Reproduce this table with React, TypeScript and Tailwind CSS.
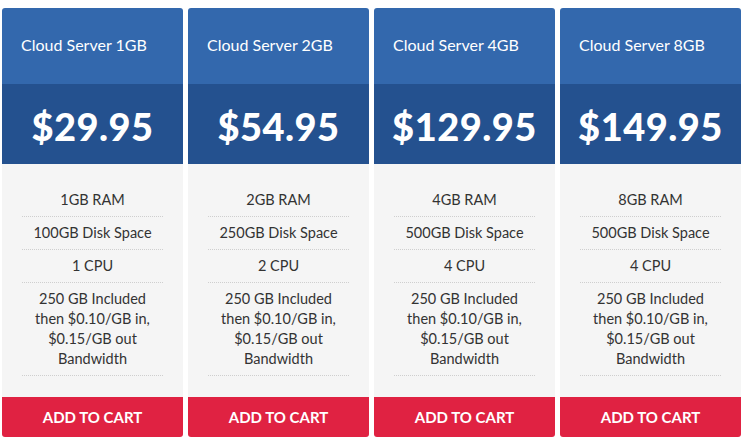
import React from "react";

const plans = [
  { name: "Cloud Server 1GB", price: "$29.95", ram: "1GB RAM", disk: "100GB Disk Space", cpu: "1 CPU" },
  { name: "Cloud Server 2GB", price: "$54.95", ram: "2GB RAM", disk: "250GB Disk Space", cpu: "2 CPU" },
  { name: "Cloud Server 4GB", price: "$129.95", ram: "4GB RAM", disk: "500GB Disk Space", cpu: "4 CPU" },
  { name: "Cloud Server 8GB", price: "$149.95", ram: "8GB RAM", disk: "500GB Disk Space", cpu: "4 CPU" },
];

export default function App() {
  return (
    <div
      className="w-[748px] h-[441px] bg-white pl-[2px] pt-[8px] flex gap-[5px]"
      style={{ fontFamily: "Lato, 'Open Sans', sans-serif" }}
    >
      {plans.map((p) => (
        <div key={p.name} className="w-[181px] flex flex-col rounded-[3px] overflow-hidden">
          <div className="h-[76px] bg-[#3368ad] flex items-center pl-[19px] pb-[2px] text-white text-[16px]">
            {p.name}
          </div>
          <div className="h-[80px] bg-[#24518f] flex items-center justify-center pt-[4px] text-white text-[38px] font-black tracking-[0.5px]">
            {p.price}
          </div>
          <div className="h-[233px] bg-[#f5f5f5] px-[20px] pt-[20px] text-[#333] text-[14.5px] leading-[20px] text-center">
            <div className="py-[6px] border-b border-dotted border-[#cfcfcf]">{p.ram}</div>
            <div className="py-[6px] border-b border-dotted border-[#cfcfcf]">{p.disk}</div>
            <div className="py-[6px] border-b border-dotted border-[#cfcfcf]">{p.cpu}</div>
            <div className="py-[6px] border-b border-dotted border-[#cfcfcf]">
              250 GB Included
              <br />
              then $0.10/GB in,
              <br />
              $0.15/GB out
              <br />
              Bandwidth
            </div>
          </div>
          <div className="h-[40px] bg-[#e02242] flex items-center justify-center text-white text-[15px] font-bold rounded-b-[3px]">
            ADD TO CART
          </div>
        </div>
      ))}
    </div>
  );
}
